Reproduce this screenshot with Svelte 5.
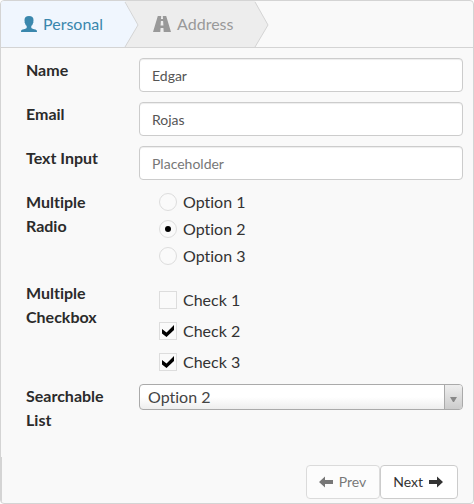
<script>
  const steps = [
    { id: 'personal', label: 'Personal', icon: 'user' },
    { id: 'address', label: 'Address', icon: 'road' }
  ];
  let current = $state('personal');
  let name = $state('Edgar');
  let email = $state('Rojas');
  let text = $state('');
  let radio = $state('Option 2');
  let checks = $state(['Check 2', 'Check 3']);
  let listed = $state('Option 2');

  const options = ['Option 1', 'Option 2', 'Option 3'];
  const boxes = ['Check 1', 'Check 2', 'Check 3'];

  function go(event, id) {
    event.preventDefault();
    current = id;
  }
</script>

<form class="wizard" onsubmit={(e) => e.preventDefault()}>
  <nav class="steps">
    {#each steps as step (step.id)}
      <a href={'#' + step.id} class="step" class:active={current === step.id} onclick={(e) => go(e, step.id)}>
        {#if step.icon === 'user'}
          <svg class="icon" width="16" height="16" viewBox="0 0 16 16" aria-hidden="true">
            <path d="M8 0C5 0 3.500 1.500 3.500 4.100c0 .7 0 1 .2 1.500-.3.3-.2 1 .1 1.500.2.3.4.4.5.9.2 1 .8 1.500 1.400 2v1.500c0 .7-.5 1-1.400 1.300C2.300 13.400.4 13.700.1 14.700L0 16h16l-.1-1.300c-.3-1-2.200-1.300-4.200-1.900-.9-.3-1.400-.6-1.400-1.300V10c.6-.5 1.200-1 1.400-2 .1-.5.300-.6.500-.9.300-.5.400-1.200.1-1.500.2-.5.200-.8.200-1.500C12.500 1.500 11 0 8 0z" />
          </svg>
        {:else}
          <svg class="icon" width="18" height="16" viewBox="0 0 18 16" aria-hidden="true">
            <path d="M4.800 0h3.400L8 3h2L9.800 0h3.400L18 16h-7.300l-.3-4H7.600l-.3 4H0zM7.900 5l-.3 4.500h2.800L10.100 5z" fill-rule="evenodd" />
          </svg>
        {/if}
        <span>{step.label}</span>
        <svg class="chevron" width="15" height="46" viewBox="0 0 15 46" aria-hidden="true">
          <path class="fill" d="M0 0v46h1L14 24 1 0z" />
          <path class="edge" d="M1 1L14 24 1 46" />
        </svg>
      </a>
    {/each}
  </nav>

  <div class="fields">
    <label class="title" for="name">Name</label>
    <input class="text" id="name" type="text" bind:value={name} />

    <label class="title" for="email">Email</label>
    <input class="text" id="email" type="text" bind:value={email} />

    <label class="title" for="text">Text Input</label>
    <input class="text" id="text" type="text" placeholder="Placeholder" bind:value={text} />

    <span class="title" id="radio-title">Multiple Radio</span>
    <div class="choices radios" role="radiogroup" aria-labelledby="radio-title">
      {#each options as option}
        <label class="choice">
          <input type="radio" name="option" value={option} bind:group={radio} />
          {option}
        </label>
      {/each}
    </div>

    <span class="title" id="check-title">Multiple Checkbox</span>
    <div class="choices checks" role="group" aria-labelledby="check-title">
      {#each boxes as box}
        <label class="choice">
          <span class="box">
            <input type="checkbox" value={box} bind:group={checks} />
            <svg class="tick" width="12" height="12" viewBox="0 0 12 12" aria-hidden="true">
              <path d="M0 4l4.500 3.500L12 0v5L4.500 12 0 8.500z" />
            </svg>
          </span>
          {box}
        </label>
      {/each}
    </div>

    <label class="title" for="list">Searchable List</label>
    <div class="select">
      <select id="list" bind:value={listed}>
        {#each options as option}
          <option>{option}</option>
        {/each}
      </select>
      <span class="drop" aria-hidden="true">
        <svg width="7" height="5" viewBox="0 0 7 5"><path d="M0 0h7L4 5H3z" /></svg>
      </span>
    </div>
  </div>

  <footer>
    <button type="button" disabled={current === 'personal'} onclick={() => (current = 'personal')}>
      <svg width="14" height="12" viewBox="0 0 14 12" aria-hidden="true"><path d="M0 6l6-5.500V4h8v4H6v3.500z" /></svg>
      Prev
    </button>
    <button type="button" onclick={() => (current = 'address')}>
      Next
      <svg width="14" height="12" viewBox="0 0 14 12" aria-hidden="true"><path d="M14 6L8 .5V4H0v4h8v3.500z" /></svg>
    </button>
  </footer>
</form>

<style>
  :global(body) {
    margin: 0;
    background: #fff;
  }
  .wizard,
  .wizard * {
    box-sizing: border-box;
  }
  .wizard {
    border: 1px solid #d4d4d4;
    border-radius: 4px;
    background: #f9f9f9;
    font: 16px/24px Lato, "Liberation Sans", sans-serif;
    font-variant-ligatures: none;
    color: #333;
    overflow: hidden;
  }
  .steps {
    display: flex;
    height: 47px;
    border-bottom: 1px solid #d4d4d4;
  }
  .step {
    position: relative;
    display: flex;
    align-items: center;
    gap: 6px;
    padding: 0 21px 0 20px;
    background: #ededed;
    color: #999;
    text-decoration: none;
  }
  .step + .step {
    padding-left: 29px;
  }
  .step.active {
    z-index: 1;
    background: #f0f6fe;
    color: #3a87ad;
  }
  .icon {
    fill: currentColor;
  }
  .chevron {
    position: absolute;
    left: 100%;
    top: 0;
  }
  .chevron .fill {
    fill: #ededed;
  }
  .active .chevron .fill {
    fill: #f0f6fe;
  }
  .chevron .edge {
    fill: none;
    stroke: #d4d4d4;
  }
  .fields {
    display: grid;
    grid-template-columns: 96px 1fr;
    column-gap: 17px;
    row-gap: 10px;
    align-items: start;
    padding: 10px 10px 0 25px;
  }
  .title {
    font-weight: 700;
    color: #2b2b2b;
  }
  .text {
    width: 100%;
    height: 34px;
    padding: 6px 12px;
    border: 1px solid #ccc;
    border-radius: 4px;
    background: #fff;
    box-shadow: inset 0 1px 1px rgba(0, 0, 0, 0.075);
    font: 14px/20px Lato, "Liberation Sans", sans-serif;
    color: #555;
  }
  .text::placeholder {
    color: #777;
    opacity: 1;
  }
  .choices {
    display: flex;
    flex-direction: column;
    padding-left: 20px;
  }
  .radios {
    gap: 3px;
    padding-bottom: 3px;
  }
  .checks {
    gap: 7px;
    padding-top: 7px;
  }
  .choice {
    display: flex;
    align-items: center;
    gap: 6px;
  }
  .choice input {
    appearance: none;
    display: grid;
    place-items: center;
    width: 18px;
    height: 18px;
    margin: 0;
    border: 1px solid #ddd;
    background: #fafafa;
  }
  .choice input[type="radio"] {
    border-radius: 50%;
  }
  .choice input[type="radio"]:checked::before {
    content: "";
    width: 6px;
    height: 6px;
    border-radius: 50%;
    background: #000;
  }
  .box {
    position: relative;
    display: flex;
  }
  .tick {
    position: absolute;
    inset: 3px;
    display: none;
    pointer-events: none;
  }
  input:checked + .tick {
    display: block;
  }
  .select {
    position: relative;
  }
  select {
    appearance: none;
    display: block;
    width: 100%;
    height: 26px;
    padding: 0 28px 0 8px;
    border: 1px solid #aaa;
    border-radius: 4px;
    background: linear-gradient(#fff 50%, #eee);
    font: 16px/24px Lato, "Liberation Sans", sans-serif;
    font-variant-ligatures: none;
    color: #444;
  }
  .drop {
    position: absolute;
    top: 1px;
    right: 1px;
    bottom: 1px;
    display: flex;
    align-items: center;
    justify-content: center;
    width: 18px;
    padding-top: 4px;
    border-left: 1px solid #aaa;
    border-radius: 0 3px 3px 0;
    background: linear-gradient(#eee, #ccc);
    pointer-events: none;
  }
  .drop svg {
    fill: #888;
  }
  footer {
    display: flex;
    justify-content: flex-end;
    margin-top: 25px;
    padding: 8px 15px 4px;
    border-left: 1px solid #d4d4d4;
  }
  button {
    display: flex;
    align-items: center;
    gap: 6px;
    padding: 6px 13px 6px 12px;
    border: 1px solid #ccc;
    border-radius: 4px;
    background: #fff;
    font: 14px/20px Lato, "Liberation Sans", sans-serif;
    color: #333;
  }
  button + button {
    padding-right: 14px;
  }
  button:disabled {
    opacity: 0.65;
  }
  button svg {
    fill: currentColor;
  }
</style>
